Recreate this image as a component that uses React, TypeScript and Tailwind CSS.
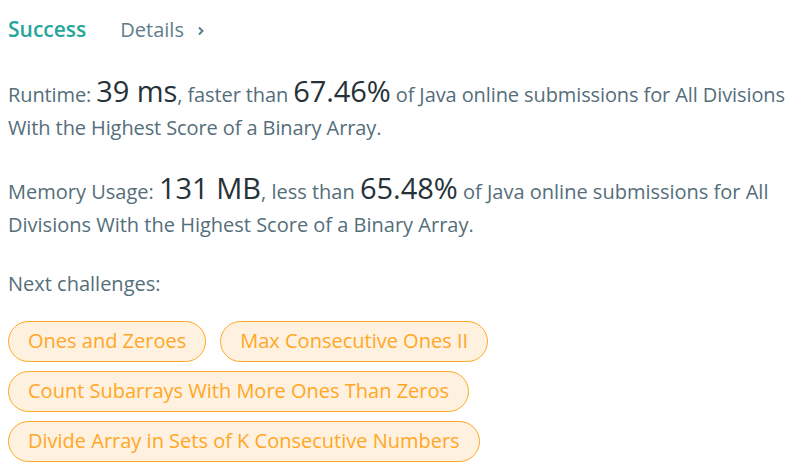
import React from "react";

const challenges = [
  ["Ones and Zeroes", "Max Consecutive Ones II"],
  ["Count Subarrays With More Ones Than Zeros"],
  ["Divide Array in Sets of K Consecutive Numbers"],
];

function Big({ children }: { children: React.ReactNode }) {
  return <span className="text-[29px] leading-none text-[#263238]">{children}</span>;
}

export default function App() {
  return (
    <main
      className="min-h-screen w-[800px] bg-white px-2 text-[20px] text-[#546e7a]"
      style={{ fontFamily: '"Open Sans", "Noto Sans", sans-serif' }}
    >
      <div className="flex items-center pt-[14px]">
        <span className="text-[21px] font-semibold text-[#26a69a]">Success</span>
        <span className="ml-[34px] flex items-center text-[20px] text-[#607d8b]">
          Details
          <svg width="10" height="12" viewBox="0 0 10 12" fill="none" className="ml-[12px] mt-[2px]">
            <path d="M3 2.5 6.5 6 3 9.5" stroke="#607d8b" strokeWidth="2" />
          </svg>
        </span>
      </div>

      <p className="mt-[30px] whitespace-nowrap leading-[33px] tracking-[-0.1px]">
        Runtime: <Big>39 ms</Big>, faster than <Big>67.46%</Big> of Java online submissions for All Divisions
        <br />
        With the Highest Score of a Binary Array.
      </p>

      <p className="mt-[29px] whitespace-nowrap leading-[33px]">
        Memory Usage: <Big>131 MB</Big>, less than <Big>65.48%</Big> of Java online submissions for All
        <br />
        Divisions With the Highest Score of a Binary Array.
      </p>

      <p className="mt-[28px]">Next challenges:</p>

      <div className="mt-[22px] flex flex-col gap-[9px]">
        {challenges.map((row, i) => (
          <div key={i} className="flex gap-[14px]">
            {row.map((c) => (
              <span
                key={c}
                className="flex h-[41px] items-center rounded-full border border-[#ffa726] bg-[#fff1e0] px-[19px] text-[20px] text-[#ffa726]"
              >
                {c}
              </span>
            ))}
          </div>
        ))}
      </div>
    </main>
  );
}
